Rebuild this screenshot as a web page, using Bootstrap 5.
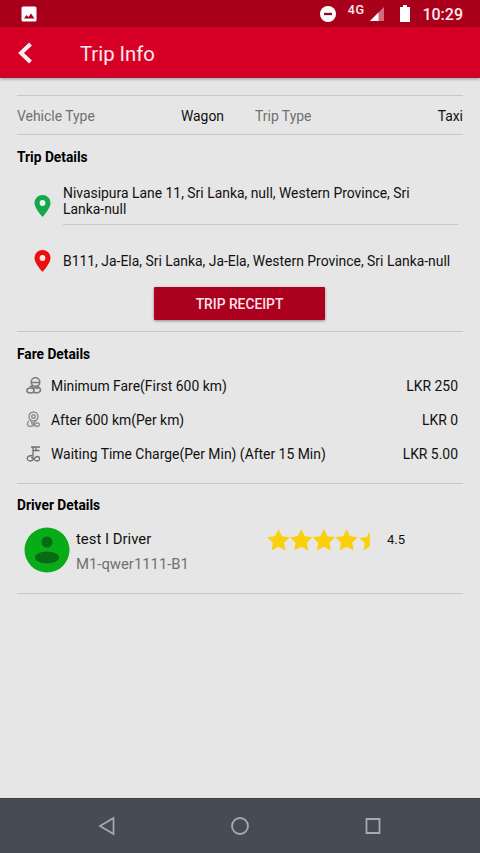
<!DOCTYPE html>
<html lang="en">
<head>
<meta charset="utf-8">
<meta name="viewport" content="width=device-width, initial-scale=1">
<title>Trip Info</title>
<link href="https://cdn.jsdelivr.net/npm/bootstrap@5.3.0/dist/css/bootstrap.min.css" rel="stylesheet">
<style>
body{font-family:Roboto,"Liberation Sans",sans-serif;font-size:13.92px;line-height:16px;color:#111;background:#e6e6e6;height:853px;overflow:hidden}
svg{display:block;flex:none}
.status{height:27px;background:#a9001c;color:#ffe9ee;padding:0 17px 0 21px}
.net{font-size:12.5px;font-weight:500;line-height:14px;margin:-7px 6px 0 12px;letter-spacing:.5px}
.clock{font-size:16px;font-weight:500;line-height:18px;margin:2px 0 0 12px}
.appbar{height:51px;background:#d60026;border-bottom:1px solid #b0142a;box-shadow:0 1px 3px rgba(0,0,0,.35);padding-left:17px}
.appbar h1{font-size:20.3px;line-height:24px;font-weight:400;margin:3px 0 0 46px;color:#ffe9ee}
.appbar svg{margin-top:2px}
.page{padding:17px 17px 0}
.types{height:40px;padding-top:2px;border-top:1px solid #c8c8c8;border-bottom:1px solid #c8c8c8}
.types>div:first-child{width:207px;margin-right:31px}
.label-text{color:#707070}
.sect{border-bottom:1px solid #c8c8c8}
.sect h2{font-size:13.75px;line-height:16px;font-weight:700;margin:0;color:#000}
.trip{height:197px;padding-top:14px}
.fare{height:152px;padding-top:14px}
.driver{height:110px;padding-top:13px}
.stop{padding-left:17px;padding-right:5px}
.stop p{margin:0 0 0 12px}
.stop-first{height:60px}
.stop-first p{border-bottom:1px solid #c8c8c8;padding:20px 0 7px}
.stop-first svg{margin-top:21px}
.stop-last{height:62px;padding-top:10px}
.btn-receipt{width:171px;height:33px;background:#ac001f;color:#ffe3e9;font-size:13.8px;font-weight:500;line-height:16px;border-radius:1px;padding:0;box-shadow:0 1px 3px rgba(0,0,0,.4);margin-right:1px}
.btn-receipt:hover{background:#980019;color:#fff}
.fees{margin-top:7px}
.fee{height:34px;padding:0 5px 0 9px}
.fee svg{margin-right:9px}
.driver-row{padding:14px 0 0 7px}
.who{padding:3px 0 0 6px}
.driver-name{font-size:14.9px;line-height:18px}
.plate{font-size:14.85px;line-height:18px;margin-top:7px}
.rating{padding:1.500px 58px 0 0}
.score{font-size:13px;margin-left:15px}
.navkeys{height:55px;background:#464c55;border-top:1px solid #3a3f46;padding:0 97px}
</style>
<script src="https://cdn.jsdelivr.net/npm/bootstrap@5.3.0/dist/js/bootstrap.bundle.min.js"></script>
</head>
<body class="d-flex flex-column m-0">
<header>
  <div class="status d-flex align-items-center">
    <svg width="16" height="16" viewBox="0 0 16 16"><path fill="#fff" fill-rule="evenodd" d="M2 .5h12a1.500 1.500 0 0 1 1.500 1.500v12a1.500 1.500 0 0 1-1.500 1.500H2A1.500 1.500 0 0 1 .5 14V2A1.500 1.500 0 0 1 2 .5zM3 12.500h10.500L10 7.500 7.500 11 5.500 9z"/></svg>
    <svg class="ms-auto" width="16" height="16" viewBox="0 0 16 16"><circle cx="8" cy="8" r="8" fill="#fff"/><path d="M4 8h8" stroke="#8d0b22" stroke-width="2.300"/></svg>
    <span class="net">4G</span>
    <svg width="14" height="14" viewBox="0 0 14 14"><path d="M14 0v14H0z" fill="#d46a7c"/><path d="M8.500 5.500V14H0z" fill="#fff"/></svg>
    <svg class="ms-3" width="10" height="17" viewBox="0 0 10 17"><path d="M3 0h4v2h3v15H0V2h3z" fill="#fff"/></svg>
    <span class="clock">10:29</span>
  </div>
  <nav class="appbar d-flex align-items-center">
    <svg width="17" height="24" viewBox="0 0 17 24"><path d="M13.500 3 4 12l9.500 9" fill="none" stroke="#ffeef1" stroke-width="4"/></svg>
    <h1>Trip Info</h1>
  </nav>
</header>
<main class="page flex-grow-1">
  <div class="types d-flex align-items-center">
    <div class="d-flex justify-content-between"><span class="label-text">Vehicle Type</span><span>Wagon</span></div>
    <div class="d-flex justify-content-between flex-grow-1"><span class="label-text">Trip Type</span><span>Taxi</span></div>
  </div>
  <section class="sect trip">
    <h2>Trip Details</h2>
    <div class="stop stop-first d-flex align-items-start">
      <svg width="17" height="40" viewBox="0 -9 17 40"><path d="M8.500 0A8 8 0 0 0 .5 8c0 5.500 8 14 8 14s8-8.500 8-14a8 8 0 0 0-8-8z" fill="#14a84a"/><circle cx="8.500" cy="8" r="2.900" fill="#e8f5ec"/></svg>
      <p class="flex-grow-1">Nivasipura Lane 11, Sri Lanka, null, Western Province, Sri <span class="text-nowrap">Lanka-null</span></p>
    </div>
    <div class="stop stop-last d-flex align-items-center">
      <svg width="17" height="23" viewBox="0 0 17 23"><path d="M8.500 0A8 8 0 0 0 .5 8c0 5.500 8 14 8 14s8-8.500 8-14a8 8 0 0 0-8-8z" fill="#ea1010"/><circle cx="8.500" cy="8" r="2.900" fill="#fde9e9"/></svg>
      <p class="flex-grow-1 text-nowrap">B111, Ja-Ela, Sri Lanka, Ja-Ela, Western Province, Sri Lanka-null</p>
    </div>
    <div class="text-center"><button type="button" class="btn btn-receipt">TRIP RECEIPT</button></div>
  </section>
  <section class="sect fare">
    <h2>Fare Details</h2>
    <div class="fees">
    <div class="fee d-flex align-items-center">
      <svg width="16" height="18" viewBox="0 0 16 18" fill="none" stroke="#7b7b7b" stroke-width="1.500"><circle cx="9.500" cy="5" r="4.300"/><path d="M5.500 5.500h8M6 8l1.500 3.500M13 8l-2.500 4M6 9.500H3.500"/><ellipse cx="4.500" cy="13.500" rx="3.600" ry="2.500"/><path d="M7 11.500c3-1.500 7.500-1.500 7.500 1.500s-5 3.500-8 2"/></svg>
      <span>Minimum Fare(First 600 km)</span><span class="ms-auto">LKR 250</span>
    </div>
    <div class="fee d-flex align-items-center">
      <svg width="16" height="18" viewBox="0 0 16 18" fill="none" stroke="#929292" stroke-width="1.500"><circle cx="7.500" cy="5.500" r="4.500"/><circle cx="7.500" cy="5.500" r="1.800"/><path d="M4 8.500 6.500 12M11 8.500 7 13M3 10c-3 2.500-1.500 5.500 1.500 5.500 3.500 0 4-3.500 7-3.500 2.500 0 2.500 3.500-.5 3.500-3 0-3.500-3-6-3"/></svg>
      <span>After 600 km(Per km)</span><span class="ms-auto">LKR 0</span>
    </div>
    <div class="fee d-flex align-items-center">
      <svg width="16" height="18" viewBox="0 0 16 18" fill="none" stroke="#6f6f6f" stroke-width="1.300"><path d="M7 13V1.500M5 2h9M7 5.500h6.500M10 2v3"/><path d="M6.500 10.500c-6.500 0-7 5.500-2 5.500 3.500 0 4-4.500 7-4.500 3 0 2.500 4.500-.5 4.500s-3.500-3.500-6-3.500"/></svg>
      <span>Waiting Time Charge(Per Min) (After 15 Min)</span><span class="ms-auto">LKR 5.00</span>
    </div>
    </div>
  </section>
  <section class="sect driver">
    <h2>Driver Details</h2>
    <div class="driver-row d-flex align-items-start">
      <svg width="46" height="46" viewBox="0 0 46 46"><circle cx="23" cy="23" r="22.500" fill="#08ab18"/><circle cx="23" cy="15" r="5.500" fill="#086b14"/><ellipse cx="23" cy="30.500" rx="12" ry="6" fill="#086b14"/></svg>
      <div class="who flex-grow-1">
        <div class="driver-name">test I Driver</div>
        <div class="plate label-text">M1-qwer1111-B1</div>
      </div>
      <div class="rating d-flex align-items-center">
        <svg width="105" height="23" viewBox="0 0 105 23" fill="#fad00c"><defs><path id="star" d="M11.500 0 15 7.200l7.800 1-5.700 5.500 1.400 7.900-7-3.800-7 3.800 1.400-7.900L.2 8.200l7.800-1z"/></defs><use href="#star"/><use href="#star" x="22.700"/><use href="#star" x="45.400"/><use href="#star" x="68.100"/><path d="M102.800 2.500v15l-6.300 4 1.300-7.300-5.300-5.200 7.300-1z"/></svg>
        <span class="score">4.5</span>
      </div>
    </div>
  </section>
</main>
<footer class="navkeys d-flex align-items-center justify-content-between">
  <svg width="19" height="20" viewBox="0 0 19 20"><path d="M16.500 2v16L3 10z" fill="none" stroke="#a6abae" stroke-width="1.700"/></svg>
  <svg width="20" height="20" viewBox="0 0 20 20"><circle cx="10" cy="10" r="8" fill="none" stroke="#a6abae" stroke-width="1.800"/></svg>
  <svg width="20" height="20" viewBox="0 0 20 20"><path d="M3.500 3h13v14h-13z" fill="none" stroke="#a6abae" stroke-width="1.800"/></svg>
</footer>
</body>
</html>
